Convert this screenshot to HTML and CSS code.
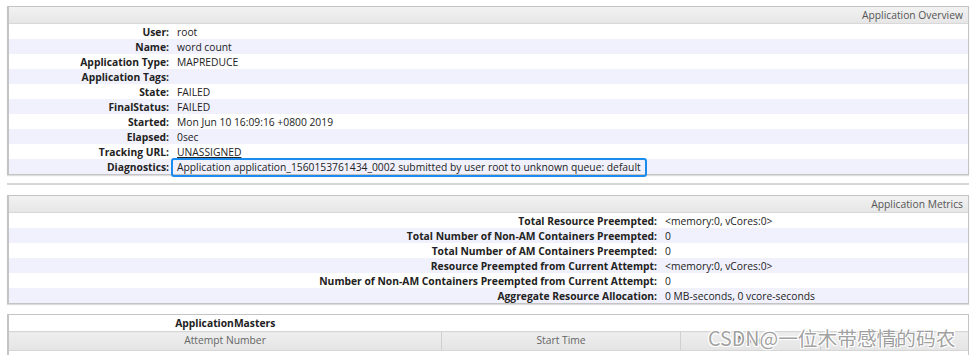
FILE: index.html
```html
<!DOCTYPE html>
<html lang="en">

<head>
	<meta charset="utf-8">
	<title>Application Overview</title>
	<link rel="stylesheet" href="styles.css">
</head>

<body>
	<div class="page">
		<div class="info">
			<div class="info_head">Application Overview</div>
			<table class="info_tbl overview">
				<tr><th>User:</th><td>root</td></tr>
				<tr><th>Name:</th><td>word count</td></tr>
				<tr><th>Application Type:</th><td>MAPREDUCE</td></tr>
				<tr><th>Application Tags:</th><td></td></tr>
				<tr><th>State:</th><td>FAILED</td></tr>
				<tr><th>FinalStatus:</th><td>FAILED</td></tr>
				<tr><th>Started:</th><td>Mon Jun 10 16:09:16 +0800 2019</td></tr>
				<tr><th>Elapsed:</th><td>0sec</td></tr>
				<tr><th>Tracking URL:</th><td><a href="#">UNASSIGNED</a></td></tr>
				<tr><th>Diagnostics:</th><td><span class="mark">Application application_1560153761434_0002 submitted by user root to unknown queue: default</span></td></tr>
			</table>
		</div>

		<hr class="sep">

		<div class="info">
			<div class="info_head">Application Metrics</div>
			<table class="info_tbl metrics">
				<tr><th>Total Resource Preempted:</th><td>&lt;memory:0, vCores:0&gt;</td></tr>
				<tr><th>Total Number of Non-AM Containers Preempted:</th><td>0</td></tr>
				<tr><th>Total Number of AM Containers Preempted:</th><td>0</td></tr>
				<tr><th>Resource Preempted from Current Attempt:</th><td>&lt;memory:0, vCores:0&gt;</td></tr>
				<tr><th>Number of Non-AM Containers Preempted from Current Attempt:</th><td>0</td></tr>
				<tr><th>Aggregate Resource Allocation:</th><td>0 MB-seconds, 0 vcore-seconds</td></tr>
			</table>
		</div>

		<div class="info masters">
			<table class="am_tbl">
				<tr class="cap"><th>ApplicationMasters</th><th></th><th></th><th></th></tr>
				<tr class="cols">
					<th class="c1">Attempt Number</th>
					<th class="c2">Start Time</th>
					<th class="c3">Node</th>
					<th class="c4">Logs</th>
				</tr>
			</table>
		</div>
	</div>

	<div class="watermark">CSDN@一位木带感情的码农</div>
</body>

</html>
```

FILE: styles.css
```css
body {
	margin:0;
	background-color:white;
	font-family:"Open Sans", "DejaVu Sans", sans-serif;
	font-size:10.3px;
	color:#222;
	overflow:hidden;
}

.page {
	padding:6px 0 0 7px;
	width:962px;
}

.info {
	border:1px solid #c4c4c4;
	border-left-width:2px;
	box-shadow:0 1px 1px #ddd;
}

.info_head {
	height:16px;
	line-height:17px;
	text-align:right;
	padding-right:5px;
	color:#555;
	background:linear-gradient(#f2f2f2, #e6e6e6);
	border-bottom:1px solid #d8d8d8;
}

table {
	border-collapse:collapse;
	width:100%;
}

.info_tbl tr {
	height:15px;
}

.info_tbl tr:nth-child(even) {
	background-color:#f1f1fd;
}

.info_tbl th {
	text-align:right;
	font-weight:bold;
	padding:1px 8px 0 0;
	white-space:nowrap;
	line-height:14px;
}

.info_tbl td {
	padding:1px 0 0 0;
	line-height:14px;
}

.overview th {
	width:160px;
}

.metrics th {
	width:648px;
}

a {
	color:#222;
}

.mark {
	border:2px solid #1a8cf0;
	border-radius:3px;
	padding:0 4px 1px 4px;
	margin-left:-6px;
}

.sep {
	border:none;
	border-top:2px solid #d6d6d6;
	margin:8px 0 10px 0;
}

.masters {
	border-bottom:none;
	box-shadow:none;
	height:50px;
	margin-top:10px;
}

.am_tbl th {
	font-weight:normal;
	padding:0;
	height:16px;
	line-height:16px;
}

.am_tbl tr.cap th {
	font-weight:bold;
	color:#222;
	background-color:white;
	line-height:15px;
}

.am_tbl tr.cols th {
	color:#666;
	background:linear-gradient(#eeeeee, #e4e4e4);
	border-top:1px solid #d6d6d6;
	border-bottom:1px solid #d6d6d6;
	border-left:1px solid #d0d0d0;
	line-height:13px;
	padding-bottom:2px;
}

.am_tbl tr.cols th.c1 {
	border-left:none;
}

.c1 {
	width:432px;
}

.c2 {
	width:238px;
}

.c3 {
	width:139px;
}

.watermark {
	position:absolute;
	left:708px;
	top:323px;
	font-family:"Noto Sans CJK SC", sans-serif;
	font-size:19.7px;
	color:rgba(120, 120, 120, 0.7);
	text-shadow:1px 1px 0 white, -1px -1px 0 white, 1px -1px 0 white, -1px 1px 0 white;
	white-space:nowrap;
}
```
